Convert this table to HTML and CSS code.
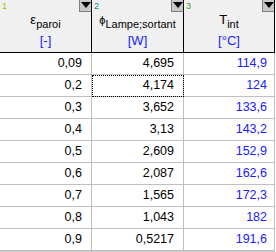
FILE: index.html
```html
<!DOCTYPE html>
<html lang="en">
<head>
  <meta charset="UTF-8">
  <title>Tableau</title>
  <link rel="stylesheet" href="styles.css">
</head>
<body>
  <div class="sheet">
    <div class="hcell">
      <span class="num n1">1</span>
      <span class="drop"></span>
      <div class="name">&epsilon;<sub>paroi</sub></div>
      <div class="unit">[-]</div>
    </div>
    <div class="hcell">
      <span class="num n2">2</span>
      <span class="drop"></span>
      <div class="name"><span class="phi">&#981;</span><sub>Lampe;sortant</sub></div>
      <div class="unit">[W]</div>
    </div>
    <div class="hcell">
      <span class="num n3">3</span>
      <span class="drop"></span>
      <div class="name">T<sub>int</sub></div>
      <div class="unit">[°C]</div>
    </div>

    <div class="cell">0,09</div><div class="cell">4,695</div><div class="cell blue">114,9</div>
    <div class="cell">0,2</div><div class="cell focus">4,174</div><div class="cell blue">124</div>
    <div class="cell">0,3</div><div class="cell">3,652</div><div class="cell blue">133,6</div>
    <div class="cell">0,4</div><div class="cell">3,13</div><div class="cell blue">143,2</div>
    <div class="cell">0,5</div><div class="cell">2,609</div><div class="cell blue">152,9</div>
    <div class="cell">0,6</div><div class="cell">2,087</div><div class="cell blue">162,6</div>
    <div class="cell">0,7</div><div class="cell">1,565</div><div class="cell blue">172,3</div>
    <div class="cell">0,8</div><div class="cell">1,043</div><div class="cell blue">182</div>
    <div class="cell">0,9</div><div class="cell">0,5217</div><div class="cell blue">191,6</div>
  </div>
</body>
</html>
```

FILE: styles.css
```css
body {
  margin: 0;
  background: #fff;
  font-family: "Liberation Sans", Arial, sans-serif;
}
.sheet {
  display: grid;
  grid-template-columns: 92px 92px 91px;
  width: 275px;
  border-bottom: 1px solid #c8c8c8;
}
.hcell {
  position: relative;
  height: 53px;
  box-sizing: border-box;
  background: #f0f0f0;
  border-right: 1px solid #000;
  border-bottom: 1px solid #000;
  display: flex;
  flex-direction: column;
  align-items: center;
  padding-top: 13px;
}
.hcell:last-child {
  border-right-color: #a0a0a0;
}
.num {
  position: absolute;
  left: 2px;
  top: 1px;
  font-size: 9px;
  line-height: 10px;
}
.n1 { color: #b8b800; }
.n2 { color: #00948c; }
.n3 { color: #3c9c1c; }
.drop {
  position: absolute;
  right: 0;
  top: 0;
  width: 12px;
  height: 12px;
  box-sizing: border-box;
  background: #c8c8c8;
  border-left: 1px solid #808080;
  border-bottom: 1px solid #808080;
}
.drop::after {
  content: "";
  position: absolute;
  left: 1px;
  top: 2px;
  border-left: 5px solid transparent;
  border-right: 5px solid transparent;
  border-top: 6px solid #000;
}
.name {
  font-size: 13px;
  line-height: 14px;
  color: #000;
  white-space: nowrap;
}
.name sub {
  font-size: 11px;
  vertical-align: -4px;
  line-height: 0;
}
.phi {
  font-size: 11px;
}
.unit {
  margin-top: 6px;
  font-size: 13px;
  line-height: 15px;
  color: #2020ff;
}
.cell {
  height: 22px;
  box-sizing: border-box;
  border-right: 1px solid #c0c0c0;
  border-bottom: 1px solid #c0c0c0;
  padding-right: 9px;
  text-align: right;
  font-size: 12.5px;
  line-height: 21px;
  color: #000;
}
.cell.blue {
  color: #2020ff;
  padding-right: 7px;
}
.cell.focus {
  outline: 1px dotted #000;
  outline-offset: -1px;
}
```
